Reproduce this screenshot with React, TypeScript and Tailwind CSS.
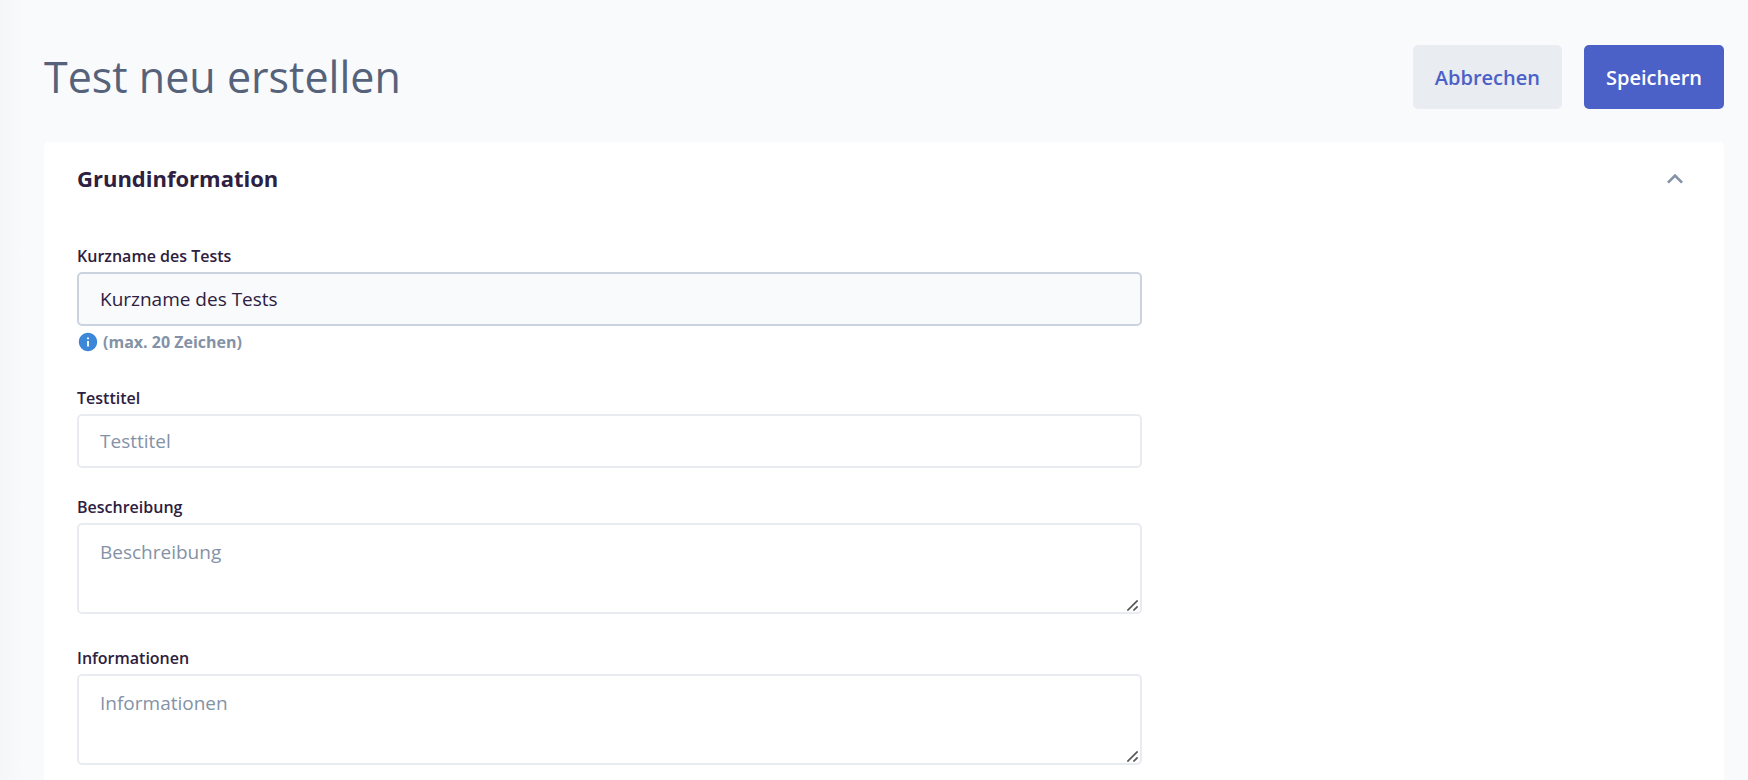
import React, { useState } from 'react';
import { MdInfo, MdKeyboardArrowUp } from 'react-icons/md';

interface FieldProps {
  id: string;
  label: string;
  multiline?: boolean;
  hint?: string;
  active?: boolean;
  value: string;
  onChange: (value: string) => void;
}

const Field: React.FC<FieldProps> = ({ id, label, multiline, hint, active, value, onChange }) => {
  const box = `block w-full rounded-[5px] border-2 px-[21px] text-[19px] leading-[26px] text-[#2d2040] placeholder:text-[#8492a6] outline-none ${
    active ? 'border-[#cbd3df] bg-[#f9fafc]' : 'border-[#e8ecf1] bg-white'
  }`;

  return (
    <div>
      <label htmlFor={id} className="mb-1 block text-[16px] leading-6 font-semibold text-[#2d2040]">{label}</label>
      {multiline ? (
        <div className="relative mb-[5px]">
          <textarea
            id={id}
            rows={2}
            placeholder={label}
            value={value}
            onChange={e => onChange(e.target.value)}
            className={`${box} resize-y pt-[14px] pb-[21px] [&::-webkit-resizer]:bg-transparent`}
          />
          {/* resize grip */}
          <svg className="pointer-events-none absolute right-1 bottom-[3px] size-[11px]" viewBox="0 0 11 11" fill="none" stroke="#555" strokeWidth="1.6">
            <path d="M0.4 10.6L10.6 0.4M6.4 10.6L10.6 6.4" />
          </svg>
        </div>
      ) : (
        <input id={id} type="text" placeholder={label} value={value} onChange={e => onChange(e.target.value)} className={`${box} py-3`} />
      )}
      {hint && (
        <p className="mt-1 mb-[5px] flex items-center gap-1 text-[16px] leading-6 font-bold text-[#8492a6]">
          <MdInfo className="size-[22px] text-[#3c87d7]" />
          {hint}
        </p>
      )}
    </div>
  );
};

const App: React.FC = () => {
  const [open, setOpen] = useState(true);
  const [shortName, setShortName] = useState('Kurzname des Tests');
  const [title, setTitle] = useState('');
  const [description, setDescription] = useState('');
  const [info, setInfo] = useState('');

  return (
    <div className="flex min-h-screen bg-[#f9fafc] font-['Open_Sans',sans-serif]">
      <div className="w-[22px] shrink-0 bg-linear-to-r from-[#f5f6f8] to-[#f9fafc]" />
      <main className="flex grow flex-col pt-[45px] pr-6 pl-[22px]">
        <header className="mb-[33px] flex items-center justify-between">
          <h1 className="text-[43px] leading-[60px] text-[#56627a]">Test neu erstellen</h1>
          <div className="flex gap-[22px]">
            <button type="button" className="h-16 rounded-[5px] bg-[#e9ecf1] px-[22px] pt-0.5 text-[20px] font-semibold text-[#4c61c8]">
              Abbrechen
            </button>
            <button type="submit" form="test-form" className="h-16 rounded-[5px] bg-[#4c61c8] px-[22px] pt-0.5 text-[20px] font-semibold text-white">
              Speichern
            </button>
          </div>
        </header>

        <section className="grow rounded-t-[5px] bg-white px-[33px]">
          <div className="flex h-[74px] items-center justify-between">
            <h2 className="pb-0.5 text-[22px] leading-[30px] font-bold text-[#2d2040]">Grundinformation</h2>
            <button type="button" aria-label="Grundinformation" aria-expanded={open} onClick={() => setOpen(!open)} className="text-[#8492a6]">
              <MdKeyboardArrowUp className={`size-8 ${open ? '' : 'rotate-180'}`} />
            </button>
          </div>

          {open && (
            <form id="test-form" onSubmit={e => e.preventDefault()} className="flex w-[66%] flex-col gap-[27px] pt-7">
              <Field id="short-name" label="Kurzname des Tests" hint="(max. 20 Zeichen)" active value={shortName} onChange={setShortName} />
              <Field id="title" label="Testtitel" value={title} onChange={setTitle} />
              <Field id="description" label="Beschreibung" multiline value={description} onChange={setDescription} />
              <Field id="info" label="Informationen" multiline value={info} onChange={setInfo} />
            </form>
          )}
        </section>
      </main>
    </div>
  );
};

export default App;
